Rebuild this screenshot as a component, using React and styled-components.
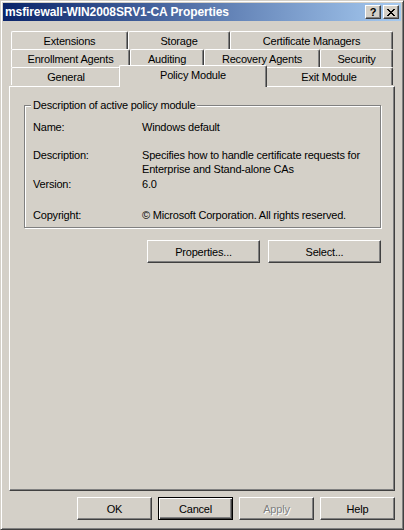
import React from "react";
import styled, { createGlobalStyle } from "styled-components";

const Global = createGlobalStyle`
  html, body { margin: 0; padding: 0; background: #d4d0c8; }
  body { font-family: "Liberation Sans", Arial, sans-serif; font-size: 11px; letter-spacing: -0.2px; color: #000; }
`;

const Window = styled.div`
  width: 404px;
  height: 530px;
  box-sizing: border-box;
  background: #d4d0c8;
  border: 1px solid;
  border-color: #d4d0c8 #404040 #404040 #d4d0c8;
  box-shadow: inset 1px 1px 0 #fff, inset -1px -1px 0 #808080;
  padding: 2px;
  display: flex;
  flex-direction: column;
`;

const TitleBar = styled.div`
  height: 18px;
  flex: 0 0 18px;
  display: flex;
  align-items: center;
  padding: 0 2px 0 2px;
  background: linear-gradient(to right, #0a246a, #a6caf0);
`;

const Title = styled.div`
  flex: 1;
  color: #fff;
  font-weight: bold;
  font-size: 12px;
  letter-spacing: -0.1px;
  white-space: nowrap;
`;

const CaptionButton = styled.div`
  width: 16px;
  height: 14px;
  box-sizing: border-box;
  margin-left: ${(p) => p.$gap}px;
  background: #d4d0c8;
  border: 1px solid;
  border-color: #fff #404040 #404040 #fff;
  box-shadow: inset -1px -1px 0 #808080;
  display: flex;
  align-items: center;
  justify-content: center;
  font-weight: bold;
  font-size: 11px;
  letter-spacing: 0;
  line-height: 12px;
  color: #000;
`;

const Body = styled.div`
  flex: 1;
  display: flex;
  flex-direction: column;
  padding: 10px 6px 7px;
`;

const TabRow = styled.div`
  display: flex;
  height: ${(p) => p.$h}px;
  margin: 0 2px;
  align-items: flex-start;
`;

const Tab = styled.div`
  position: relative;
  box-sizing: border-box;
  flex: 0 0 ${(p) => (p.$active ? p.$w + 4 : p.$w)}px;
  height: ${(p) => (p.$active ? 22 : 18)}px;
  margin: ${(p) => (p.$active ? "-2px -2px 0" : "0")};
  z-index: ${(p) => (p.$active ? 2 : 0)};
  background: #d4d0c8;
  border-top: 1px solid #fff;
  border-left: 1px solid #fff;
  border-right: 1px solid #404040;
  border-radius: 2px 2px 0 0;
  box-shadow: inset -1px 0 0 #808080;
  text-align: center;
  padding-top: 2px;
  line-height: 15px;
  white-space: nowrap;
`;

const Panel = styled.div`
  flex: 1;
  box-sizing: border-box;
  border: 1px solid;
  border-color: #fff #404040 #404040 #fff;
  box-shadow: inset -1px -1px 0 #808080;
  padding: 11px 13px 0 14px;
  display: flex;
  flex-direction: column;
`;

const GroupBox = styled.fieldset`
  margin: 0;
  min-inline-size: 0;
  border: 1px solid #808080;
  box-shadow: inset 1px 1px 0 #fff, 1px 1px 0 #fff;
  padding: 8px 8px 5px 8px;
`;

const Legend = styled.legend`
  padding: 0 2px;
  margin-left: -2px;
  line-height: 14px;
  background: #d4d0c8;
`;

const InfoGrid = styled.div`
  display: grid;
  grid-template-columns: 109px 1fr;
  line-height: 14px;
`;

const Label = styled.div`
  margin-top: ${(p) => p.$mt || 0}px;
`;

const Value = styled.div`
  margin-top: ${(p) => p.$mt || 0}px;
`;

const ButtonRow = styled.div`
  display: flex;
  justify-content: flex-end;
  gap: ${(p) => p.$gap}px;
  margin-top: ${(p) => p.$mt}px;
`;

const Button = styled.div`
  box-sizing: border-box;
  width: ${(p) => p.$w}px;
  height: 23px;
  background: #d4d0c8;
  border: 1px solid;
  border-color: ${(p) => (p.$default ? "#000" : "#fff #404040 #404040 #fff")};
  box-shadow: ${(p) =>
    p.$default
      ? "inset 1px 1px 0 #fff, inset -1px -1px 0 #404040, inset -2px -2px 0 #808080"
      : "inset -1px -1px 0 #808080"};
  display: flex;
  align-items: center;
  justify-content: center;
  color: ${(p) => (p.$disabled ? "#808080" : "#000")};
  text-shadow: ${(p) => (p.$disabled ? "1px 1px 0 #fff" : "none")};
`;

const rows = [
  [
    ["Extensions", 117],
    ["Storage", 102],
    ["Certificate Managers", 163],
  ],
  [
    ["Enrollment Agents", 119],
    ["Auditing", 74],
    ["Recovery Agents", 116],
    ["Security", 73],
  ],
  [
    ["General", 110],
    ["Policy Module", 144, true],
    ["Exit Module", 128],
  ],
];

export default function App() {
  return (
    <>
      <Global />
      <Window>
        <TitleBar>
          <Title>msfirewall-WIN2008SRV1-CA Properties</Title>
          <CaptionButton $gap={0}>?</CaptionButton>
          <CaptionButton $gap={2}>
            <svg width="8" height="7" viewBox="0 0 8 7">
              <path
                d="M0 0h2v1h1v1h2V1h1V0h2v1H7v1H6v1H5v1h1v1h1v1h1v1H6V6H5V5H3v1H2v1H0V6h1V5h1V4h1V3H2V2H1V1H0z"
                fill="#000"
              />
            </svg>
          </CaptionButton>
        </TitleBar>
        <Body>
          {rows.map((row, i) => (
            <TabRow key={i} $h={i === 2 ? 19 : 18}>
              {row.map(([label, w, active]) => (
                <Tab key={label} $w={w} $active={active}>
                  {label}
                </Tab>
              ))}
            </TabRow>
          ))}
          <Panel>
            <GroupBox>
              <Legend>Description of active policy module</Legend>
              <InfoGrid>
                <Label>Name:</Label>
                <Value>Windows default</Value>
                <Label $mt={14}>Description:</Label>
                <Value $mt={14}>
                  Specifies how to handle certificate requests for
                  <br />
                  Enterprise and Stand-alone CAs
                </Value>
                <Label $mt={1}>Version:</Label>
                <Value $mt={1}>6.0</Value>
                <Label $mt={17}>Copyright:</Label>
                <Value $mt={17}>© Microsoft Corporation. All rights reserved.</Value>
              </InfoGrid>
            </GroupBox>
            <ButtonRow $gap={8} $mt={12}>
              <Button $w={113}>Properties...</Button>
              <Button $w={113}>Select...</Button>
            </ButtonRow>
          </Panel>
          <ButtonRow $gap={6} $mt={6}>
            <Button $w={75}>OK</Button>
            <Button $w={75} $default>
              Cancel
            </Button>
            <Button $w={75} $disabled>
              Apply
            </Button>
            <Button $w={75}>Help</Button>
          </ButtonRow>
        </Body>
      </Window>
    </>
  );
}
